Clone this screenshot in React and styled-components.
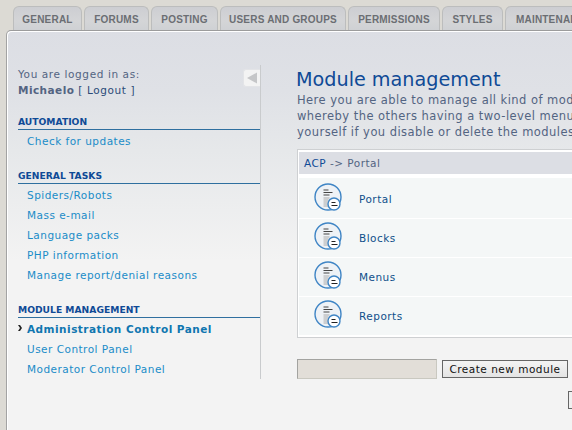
import React from 'react';
import styled, { createGlobalStyle } from 'styled-components';

const Global = createGlobalStyle`
  html, body { margin: 0; padding: 0; background: #dcdad4; overflow: hidden; }
  #root { width: 572px; height: 430px; overflow: hidden; }
`;
const font = `"DejaVu Sans", Verdana, sans-serif`;

const Page = styled.div`
  width: 572px; height: 430px; overflow: hidden; box-sizing: border-box;
  padding: 6px 0 0 13px; background: #dcdad4; font-family: ${font};
`;
const Tabs = styled.div`
  display: flex; gap: 2px; height: 24px; width: 700px;
`;
const Tab = styled.div`
  flex: none; box-sizing: border-box; height: 24px; width: ${p => p.$w}px;
  border: 1px solid #bcbdbd; border-bottom: none; border-radius: 6px 6px 0 0;
  background: linear-gradient(#cdced2, #d4d5d7 60%, #cfd1d4);
  color: #6b6e73; font-family: "Liberation Sans", Arial, sans-serif; font-size: 10px; font-weight: bold;
  letter-spacing: .2px; text-align: center; line-height: 25px; white-space: nowrap;
`;
const Panel = styled.div`
  margin-left: -7px; width: 700px; height: 400px; box-sizing: border-box;
  border-top: 1px solid #9c9c9c; border-left: 1px solid #a3a3a3; border-radius: 5px 0 0 0;
  box-shadow: inset 1px 1px 0 #fff;
  background: linear-gradient(#dcdee4 0, #dfe1e6 60px, #e6e8ea 120px, #f3f3f3 230px);
  display: flex; padding: 34px 0 0 11px;
`;
const Sidebar = styled.div`
  position: relative; flex: none; width: 243px; height: 314px; box-sizing: border-box;
  border-right: 1px solid #c9cbcd;
`;
const Logged = styled.div`
  font-size: 10.5px; letter-spacing: .6px; line-height: 16px; color: #536482; padding-top: 1px;
  b { font-weight: bold; letter-spacing: .45px; }
  span { color: #2b4a78; }
`;
const Collapse = styled.div`
  position: absolute; top: 4px; right: 0; width: 17px; height: 18px; box-sizing: border-box;
  background: #f3f3f3; border: 1px solid #e3e4e7; border-right: none; border-radius: 3px 0 0 3px;
  display: flex; align-items: center; justify-content: center;
`;
const SectionTitle = styled.div`
  font-size: 9.2px; font-weight: bold; color: #0f4a96; height: 14px; line-height: 13px;
  margin: ${p => p.$top}px 0 1px; border-bottom: 1px solid #2f6f9f; white-space: nowrap;
`;
const MenuItem = styled.div`
  position: relative; height: 20px; line-height: 20px; padding-left: 9px;
  font-size: 10.5px; letter-spacing: .48px; color: ${p => p.$active ? '#0f76b0' : '#1a8cc8'};
  font-weight: ${p => p.$active ? 'bold' : 'normal'}; white-space: nowrap;
`;
const Bullet = styled.svg`
  position: absolute; left: 0; top: 6px;
`;
const Main = styled.div`
  margin-left: 36px; width: 400px; flex: none;
`;
const Title = styled.h1`
  margin: 0 0 0 -1px; font-size: 19.2px; font-weight: normal; color: #0f4a96; line-height: 25px;
  white-space: nowrap; padding-top: 2px;
`;
const Intro = styled.p`
  margin: 0; font-size: 11.5px; letter-spacing: .45px; line-height: 16px; color: #536482; white-space: nowrap;
`;
const Table = styled.div`
  margin-top: 9px; width: 400px; box-sizing: border-box;
  border: 1px solid #ced0d2; background: #fff; padding: 1px 0 1px 1px;
`;
const Head = styled.div`
  height: 22px; line-height: 22px; padding-left: 5px; background: #dcdee4; margin: 1px 0 4px;
  font-size: 10.5px; letter-spacing: .48px; color: #536482;
  b { font-weight: normal; color: #0f4a96; }
`;
const Row = styled.div`
  display: flex; box-sizing: border-box; height: 38px; background: #f4f7f7; margin-bottom: 1px;
  ${Head} + & { height: 40px; padding-top: 2px; }
`;
const IconCell = styled.div`
  flex: none; width: 55px; margin-right: 2px; padding: 0 0 2px 4px; box-sizing: border-box;
  display: flex; align-items: center; justify-content: center;
`;
const Label = styled.div`
  padding-left: 3px; font-size: 10.5px; letter-spacing: .48px; color: #0f4f8a; line-height: 38px;
`;
const Controls = styled.div`
  display: flex; gap: 5px; margin-top: 21px; align-items: center;
`;
const Select = styled.div`
  width: 140px; height: 20px; box-sizing: border-box; background: #e2ded8;
  border: 1px solid #c9c8c0; border-top-color: #a3a3a0; border-left-color: #a3a3a0;
`;
const Button = styled.button`
  width: 126px; height: 18px; box-sizing: border-box; padding: 0; font-family: ${font};
  font-size: 10.5px; letter-spacing: .5px; color: #111; background: linear-gradient(#f4f4f4, #e4e4e4);
  border: 1px solid #666; border-radius: 0; white-space: nowrap;
`;
const Stub = styled.div`
  margin: 12px 0 0 271px; width: 20px; height: 18px; box-sizing: border-box;
  border: 1px solid #666; background: #f0f0f0;
`;

const ModuleIcon = () => (
  <svg width="30" height="30" viewBox="0 0 30 30">
    <circle cx="14" cy="14" r="13" fill="#eef2f6" stroke="#3f85c5" strokeWidth="1.4" />
    <path d="M9.5 7h5M9.5 9.5h9M9.5 12h6" stroke="#444" strokeWidth="1" />
    <path d="M9.5 15h6M9.5 17h5M9.5 19h6M9.5 21h5M9.5 23h6" stroke="#aaa" strokeWidth="1" />
    <circle cx="20" cy="21" r="6" fill="#fff" stroke="#3f85c5" strokeWidth="1.4" />
    <path d="M17.5 19.5h4M17.5 22.5h6" stroke="#222" strokeWidth="1.2" />
  </svg>
);

const tabs = [['GENERAL', 69], ['FORUMS', 65], ['POSTING', 67], ['USERS AND GROUPS', 126], ['PERMISSIONS', 92], ['STYLES', 61], ['MAINTENANCE', 98]];
const sections = [
  { title: 'AUTOMATION', top: 17, items: ['Check for updates'] },
  { title: 'GENERAL TASKS', top: 18, items: ['Spiders/Robots', 'Mass e-mail', 'Language packs', 'PHP information', 'Manage report/denial reasons'] },
  { title: 'MODULE MANAGEMENT', top: 18, items: ['Administration Control Panel', 'User Control Panel', 'Moderator Control Panel'], active: 0 },
];
const modules = ['Portal', 'Blocks', 'Menus', 'Reports'];

export default function App() {
  return (
    <Page>
      <Global />
      <Tabs>{tabs.map(([t, w]) => <Tab key={t} $w={w}>{t}</Tab>)}</Tabs>
      <Panel>
        <Sidebar>
          <Logged>You are logged in as:<br /><b>Michaelo</b> <span>[ Logout ]</span></Logged>
          <Collapse>
            <svg width="12" height="12" viewBox="0 0 12 12"><path d="M11 0.5V11.5L1 6Z" fill="#c5c6c8" /></svg>
          </Collapse>
          {sections.map(s => (
            <div key={s.title}>
              <SectionTitle $top={s.top}>{s.title}</SectionTitle>
              {s.items.map((it, i) => (
                <MenuItem key={it} $active={s.active === i}>
                  {s.active === i && (
                    <Bullet width="5" height="6" viewBox="0 0 5 6"><path d="M0 0h2l2 3-2 3H0l2-3Z" fill="#222" /></Bullet>
                  )}
                  {it}
                </MenuItem>
              ))}
            </div>
          ))}
        </Sidebar>
        <Main>
          <Title>Module management</Title>
          <Intro>Here you are able to manage all kind of modules. Please note that the</Intro>
          <Intro>whereby the others having a two-level menu. You are also able to lock</Intro>
          <Intro>yourself if you disable or delete the modules required for this panel.</Intro>
          <Table>
            <Head><b>ACP</b> -&gt; Portal</Head>
            {modules.map(m => (
              <Row key={m}>
                <IconCell><ModuleIcon /></IconCell>
                <Label>{m}</Label>
              </Row>
            ))}
          </Table>
          <Controls><Select /><Button>Create new module</Button></Controls>
          <Stub />
        </Main>
      </Panel>
    </Page>
  );
}
